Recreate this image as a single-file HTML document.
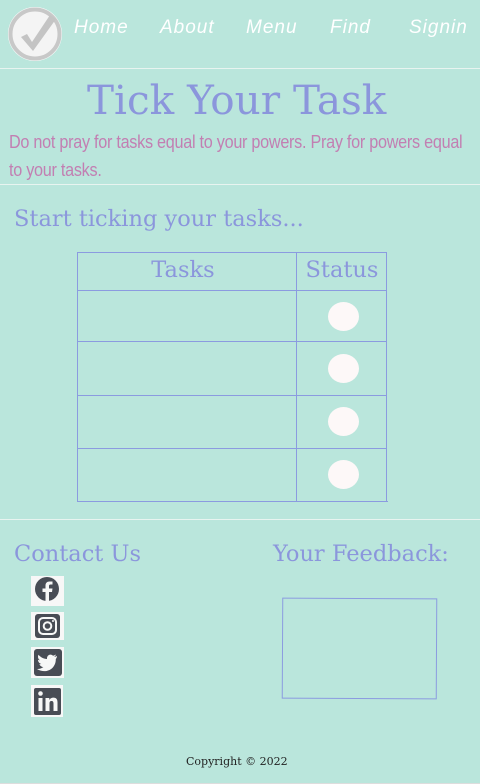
<!DOCTYPE html>
<html><head><meta charset="utf-8"><style>
*{margin:0;padding:0;box-sizing:border-box}
body{width:480px;height:784px;background:#bae6dc;position:relative;overflow:hidden;font-family:"DejaVu Serif",serif}
.a{position:absolute}
.nav{color:#fff;font-family:"Liberation Sans",sans-serif;font-size:19px;font-style:italic;font-weight:300;letter-spacing:1px;top:17px}
.hr{position:absolute;left:0;width:480px;height:1px;background:#e8f4f0}
.blue{color:#8b96dc;font-weight:normal}
.line{position:absolute;background:#8b9be0}
.c{position:absolute;width:31px;height:29px;border-radius:50%;background:#fdf8f8;left:328px}
.ic{position:absolute;left:31px;width:33px;height:30px;background:#f7f7f7}
</style></head><body>
<svg class="a" style="left:6px;top:5px" width="58" height="58" viewBox="0 0 58 58">
<circle cx="29" cy="29" r="27" fill="#fbfbfb"/>
<circle cx="29" cy="29" r="24.5" fill="#f4f4f4" stroke="#c8c8c8" stroke-width="4"/>
<path d="M15 32 L21 29 L26 37 L44 10 L50 14 L27 46 Z" fill="#c4c4c4"/>
</svg>
<div class="a nav" style="left:74px">Home</div>
<div class="a nav" style="left:160px">About</div>
<div class="a nav" style="left:246px">Menu</div>
<div class="a nav" style="left:330px">Find</div>
<div class="a nav" style="left:409px">Signin</div>
<div class="hr" style="top:68px"></div>
<div class="a blue" style="left:87px;top:76px;font-size:40.5px;white-space:nowrap">Tick Your Task</div>
<div class="a" style="left:9px;top:128px;width:520px;color:#c27fb2;font-family:'Liberation Sans',sans-serif;font-size:18px;line-height:28px;letter-spacing:-0.3px;transform:scaleX(0.9);transform-origin:left">Do not pray for tasks equal to your powers. Pray for powers equal to your tasks.</div>
<div class="hr" style="top:184px"></div>
<div class="a blue" style="left:14px;top:206px;font-size:22.5px;white-space:nowrap">Start ticking your tasks...</div>
<div class="line" style="left:77px;top:252px;width:309px;height:1px"></div>
<div class="line" style="left:77px;top:290px;width:309px;height:1px"></div>
<div class="line" style="left:77px;top:341px;width:310px;height:1px"></div>
<div class="line" style="left:77px;top:395px;width:310px;height:1px"></div>
<div class="line" style="left:77px;top:448px;width:310px;height:1px"></div>
<div class="line" style="left:77px;top:501px;width:311px;height:1px"></div>
<div class="line" style="left:77px;top:252px;width:1px;height:250px"></div>
<div class="line" style="left:296px;top:252px;width:1px;height:250px"></div>
<div class="line" style="left:386px;top:252px;width:1px;height:250px"></div>
<div class="a blue" style="left:77px;width:212px;text-align:center;top:257px;font-size:22.5px">Tasks</div>
<div class="a blue" style="left:296px;width:92px;text-align:center;top:257px;font-size:22.5px">Status</div>
<div class="c" style="top:302px"></div>
<div class="c" style="top:354px"></div>
<div class="c" style="top:407px"></div>
<div class="c" style="top:460px"></div>
<div class="hr" style="top:519px"></div>
<div class="a blue" style="left:14px;top:541px;font-size:22.5px;white-space:nowrap">Contact Us</div>
<div class="a blue" style="left:273px;top:541px;font-size:22.5px;white-space:nowrap">Your Feedback:</div>
<div class="ic" style="top:576px"><svg width="33" height="30" viewBox="0 0 33 30"><circle cx="16" cy="13" r="12" fill="#484c55"/><path d="M18 30 V16 H21 L21.5 12.5 H18 V10 C18 9 18.5 8.5 19.5 8.5 H21.5 V5.5 H18.5 C16 5.5 14.5 7 14.5 9.5 V12.5 H11.5 V16 H14.5 V30 Z" fill="#f7f7f7"/></svg></div>
<div class="ic" style="top:612px;height:28px"><svg width="33" height="28" viewBox="0 0 33 28"><rect x="4" y="2" width="25" height="24" rx="3" fill="#484c55"/><rect x="8" y="6" width="17" height="16" rx="4" fill="none" stroke="#f7f7f7" stroke-width="2"/><circle cx="16.5" cy="14" r="3.8" fill="none" stroke="#f7f7f7" stroke-width="2"/><circle cx="22" cy="9" r="1" fill="#f7f7f7"/></svg></div>
<div class="ic" style="top:647px;height:31px"><svg width="33" height="31" viewBox="0 0 33 31"><rect x="3" y="2" width="28" height="27" rx="3" fill="#484c55"/><path d="M26 9 C25 9.5 24 9.8 23 10 C24 9.3 24.6 8.5 25 7.5 C24 8 23 8.5 22 8.7 C20 6.8 16.5 7.5 16 11 L16 12 C12.5 11.8 9.5 10 7.5 7.7 C6.5 9.5 7 12 9 13.3 C8.3 13.3 7.6 13 7 12.8 C7 15 8.5 16.5 10.3 17 C9.7 17.2 9 17.2 8.4 17 C9 18.8 10.5 20 12.4 20 C10.5 21.5 8.2 22.2 6 22 C15 27.5 25 22 24.8 12 C25.5 11.2 26 10 26 9 Z" fill="#f7f7f7"/></svg></div>
<div class="ic" style="top:685px;height:32px;width:32px"><svg width="32" height="32" viewBox="0 0 32 32"><rect x="3" y="3" width="27" height="27" rx="2" fill="#484c55"/><rect x="7.5" y="13" width="4" height="13" fill="#f7f7f7"/><circle cx="9.5" cy="8.5" r="2.3" fill="#f7f7f7"/><path d="M14.5 13 H18.3 V15 C19.5 13 21 12.6 22.5 12.6 C25.5 12.6 26.5 14.5 26.5 17.5 V26 H22.5 V18.5 C22.5 17 22 16 20.5 16 C19 16 18.5 17 18.5 18.5 V26 H14.5 Z" fill="#f7f7f7"/></svg></div>
<div class="a" style="left:282px;top:598px;width:155px;height:101px;border:1px solid #8b9be0;transform:rotate(0.3deg)"></div>
<div class="a" style="left:186px;top:755px;font-size:11px;color:#222;white-space:nowrap">Copyright © 2022</div>
<div class="hr" style="top:783px;background:#ddd"></div>
</body></html>
